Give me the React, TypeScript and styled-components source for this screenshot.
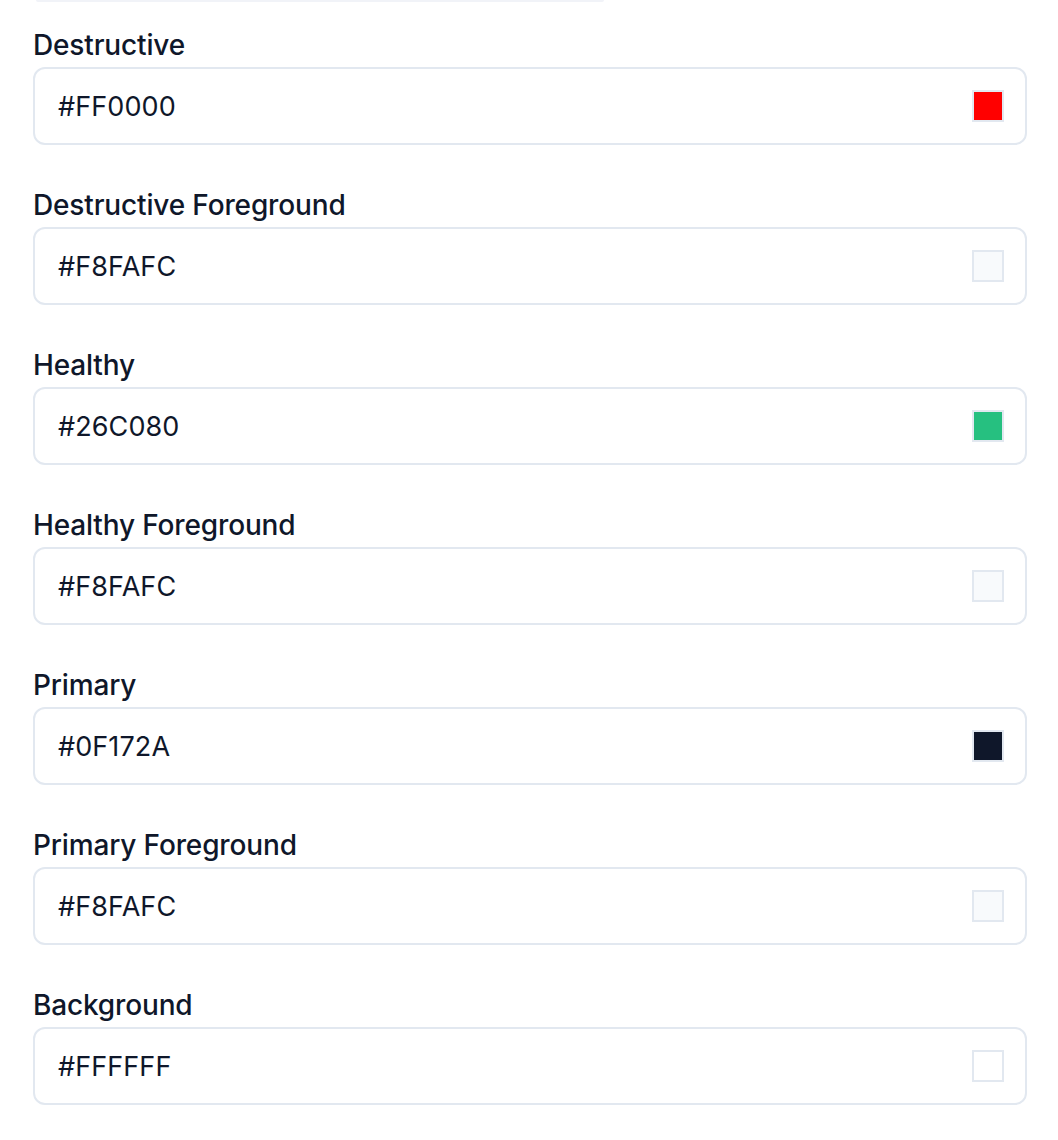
import React from "react";
import styled, { createGlobalStyle } from "styled-components";

const GlobalStyle = createGlobalStyle`
  html, body {
    margin: 0;
    padding: 0;
    background: #ffffff;
  }
  body {
    font-family: Inter, "Noto Sans", "Liberation Sans", sans-serif;
    color: #0f172a;
    -webkit-font-smoothing: antialiased;
  }
`;

const Page = styled.div`
  width: 1058px;
  min-height: 1140px;
  box-sizing: border-box;
  padding: 0 31px 0 33px;
  background: #ffffff;
`;

const TopRemnant = styled.div`
  width: 568px;
  height: 2px;
  margin-left: 3px;
  background: #f1f3f8;
  border-radius: 0 0 6px 6px;
`;

const FieldList = styled.div`
  display: flex;
  flex-direction: column;
  gap: 46px;
  padding-top: 29px;
`;

const Field = styled.div`
  display: flex;
  flex-direction: column;
  gap: 8px;
`;

const Label = styled.label`
  font-size: 28px;
  line-height: 28px;
  font-weight: 500;
  color: #0f172a;
  letter-spacing: -0.15px;
`;

const InputBox = styled.div`
  display: flex;
  align-items: center;
  justify-content: space-between;
  height: 78px;
  box-sizing: border-box;
  border: 2px solid #e2e8f0;
  border-radius: 12px;
  padding: 0 21px 0 23px;
  background: #ffffff;
`;

const Value = styled.span`
  font-size: 27px;
  font-weight: 400;
  color: #0f172a;
  letter-spacing: 0.1px;
`;

const Swatch = styled.span<{ $color: string }>`
  width: 32px;
  height: 32px;
  box-sizing: border-box;
  border: 2px solid #e2e8f0;
  background: ${(p) => p.$color};
  flex: none;
`;

const fields = [
  { label: "Destructive", value: "#FF0000" },
  { label: "Destructive Foreground", value: "#F8FAFC" },
  { label: "Healthy", value: "#26C080" },
  { label: "Healthy Foreground", value: "#F8FAFC" },
  { label: "Primary", value: "#0F172A" },
  { label: "Primary Foreground", value: "#F8FAFC" },
  { label: "Background", value: "#FFFFFF" },
];

export default function App() {
  return (
    <>
      <GlobalStyle />
      <Page>
        <TopRemnant />
        <FieldList>
          {fields.map((f) => (
            <Field key={f.label}>
              <Label>{f.label}</Label>
              <InputBox>
                <Value>{f.value}</Value>
                <Swatch $color={f.value} />
              </InputBox>
            </Field>
          ))}
        </FieldList>
      </Page>
    </>
  );
}
